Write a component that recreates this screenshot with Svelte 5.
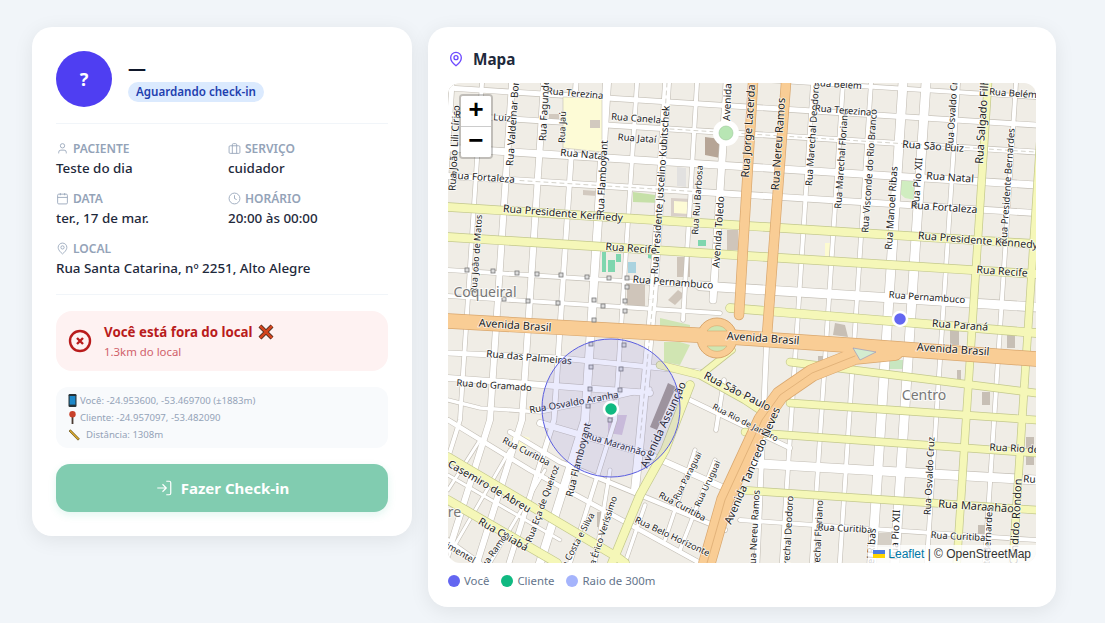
<script>
	// map data is in page coordinates, the svg viewBox starts at the map's corner
	const line = (y0, x1 = 448, x2 = 1036, k = 0.063) => [[x1, y0 + k * (x1 - 448)], [x2, y0 + k * (x2 - 448)]];
	const upright = (x0, y2 = 563) => [[x0, 83], [x0 - 0.065 * (y2 - 83), y2]];
	const bent = (x0) => [[x0, 83], [x0 - 22, 420], [x0 - 67, 563]];

	const minor = [
		[line(60, 770), 4], [line(88), 5], [line(115), 5], [line(148), 7], [line(176), 6],
		[line(270, 448, 700), 4], [line(270, 700), 9], [line(296, 448, 720), 4],
		[bent(452), 5], [bent(482), 4], [bent(512), 6], [bent(544), 6], [bent(576), 5], [bent(607), 8], [bent(637), 4],
		[[[667, 83], [653, 300], [640, 440], [635, 490]], 8],
		[[[697, 83], [683, 320]], 4], [[[727, 83], [713, 300]], 7],
		[upright(813), 4], [upright(843), 4], [upright(871), 4], [upright(903), 9], [upright(926), 9],
		[upright(958), 4], [upright(1016), 4], [[[767, 335], [757, 563]], 5], [[[724, 380], [716, 430]], 4],
		[[[448, 353], [560, 358], [700, 372]], 5],
		[[[448, 378], [650, 393]], 6],
		[[[448, 400], [480, 408], [540, 412], [620, 396], [650, 389]], 3.5],
		[[[540, 423], [650, 455], [740, 495]], 6],
		[[[510, 432], [560, 462], [640, 495], [725, 530]], 4.5],
		[[[448, 420], [530, 470], [640, 530], [700, 563]], 4.5],
		[[[448, 475], [560, 540]], 3],
		[[[690, 400], [790, 448]], 4.5],
		[[[448, 540], [480, 563]], 4],
		[[[480, 440], [448, 490]], 3], [[[510, 450], [455, 545]], 3], [[[545, 470], [490, 563]], 3],
		[[[695, 450], [665, 540]], 3.5], [[[715, 460], [680, 550]], 3.5], [[[645, 505], [625, 563]], 3.5],
		[[[610, 470], [595, 563]], 3.5],
		[[[745, 463], [1036, 480]], 9],
		[[[740, 520], [1036, 540]], 4]
	];
	const dotted = [
		line(115, 670), line(176, 520, 700), [[667, 83], [653, 300], [640, 440]]
	];
	const yellow = [
		[line(207), 8], [line(237), 8],
		[[[730, 308], [1036, 333]], 8],
		[upright(988), 7], [upright(1044), 7],
		[[[790, 362], [1036, 393]], 7], [[[790, 403], [1036, 420]], 7], [[[745, 432], [1036, 453]], 7],
		[[[740, 490], [1036, 510]], 7],
		[[[448, 457], [617, 557], [625, 563]], 8], [[[448, 500], [557, 563]], 8],
		[[[690, 385], [665, 450], [640, 495], [612, 563]], 8],
		[[[660, 365], [700, 375], [745, 400], [772, 418]], 7],
		[[[732, 350], [703, 373]], 6]
	];
	const orange = [
		[[[753, 83], [739, 315]], 9], [[[786, 83], [767, 335]], 9],
		[[[707, 563], [725, 500], [762, 420], [780, 395], [812, 373], [855, 356], [895, 352]], 16],
		[[[448, 321], [730, 337], [860, 346], [1036, 359]], 14]
	];

	const areas = [
		['#d9d0c9', '671,198 692,199 692,217 671,216'], ['#fdfbd6', '674,201 689,202 689,214 674,213'],
		['#c6e0a8', '633,192 663,196 660,203 633,202'], ['#b6a596', '705,137 720,139 720,158 705,155'],
		['#d2c9bf', '549,114 559,114 559,120 549,120'], ['#d2c9bf', '583,190 597,191 597,196 583,195'], ['#e2e1e0', '677,167 686,168 686,187 677,186'],
		['#7fd6af', '602,252 606,252 606,272 602,272'], ['#7fd6af', '608,260 615,260 615,272 608,272'], ['#7fd6af', '616,254 621,254 621,262 616,262'],
		['#aad3df', '628,262 636,262 636,273 628,273'], ['#7fd6af', '698,240 706,240 706,246 698,246'], ['#7fd6af', '648,254 652,255 652,259 648,258'],
		['#cfc5ba', '677,257 690,257 690,277 677,277'], ['#cfc5ba', '727,230 738,230 738,250 727,250'], ['#cfc5ba', '627,283 645,283 645,307 627,306'],
		['#cfc5ba', '668,300 678,290 685,295 675,305'], ['#cfe5b4', '660,318 690,325 690,332 660,330'], ['#d0e5b2', '664,342 680,342 690,345 680,365 664,362'],
		['#a69a92', '668,383 676,387 657,430 650,427'], ['#d7c7d7', '608,415 627,415 622,435 608,433'], ['#c8e6c0', '888,360 904,360 904,369 888,369'],
		['#fdfbd0', '825,243 833,243 833,256 825,256'], ['#d0edc0', '898,180 915,180 915,200 905,198 898,192'], ['#fdfbd0', '513,433 530,438 525,450 510,445'],
		['#c7bfb5', '950,330 959,330 959,345 950,345'], ['#c7bfb5', '1007,333 1015,334 1015,348 1007,348'], ['#c7bfb5', '835,323 845,325 848,337 833,335'],
		['#c7bfb5', '982,392 990,392 990,405 982,405'], ['#c7bfb5', '957,370 961,370 961,380 957,380'], ['#c7bfb5', '818,356 828,356 828,362 818,362'],
		['#c7bfb5', '1026,437 1034,437 1034,465 1026,465'], ['#c7bfb5', '978,525 985,525 985,535 978,535'], ['#c7bfb5', '597,512 605,512 602,527 597,527'],
		['#d5cfc6', '875,533 893,533 893,547 875,547']
	];

	const bollards = [
		[467, 270], [493, 271], [517, 273], [537, 274], [561, 275], [587, 277], [609, 278], [627, 278], [627, 287], [504, 299],
		[528, 301], [558, 303], [594, 300], [625, 301], [603, 306], [625, 311], [594, 320], [591, 344], [624, 345], [591, 367],
		[621, 369], [590, 389], [620, 390], [615, 397], [588, 406], [610, 420]
	];

	// text, x, y, rotation, size
	const labels = [
		['Rua Terezina', 575, 94, 5, 9.5], ['Rua Canela', 636, 119, 4, 9.5], ['Rua Jataí', 637, 139, 4, 9.5], ['Rua Natal', 583, 155, 5, 10],
		['Rua Fortaleza', 483, 178, 4, 10], ['Rua Presidente Kennedy', 563, 214, 4.5, 10.5], ['Rua João Lili Círico', 455, 148, -87, 10],
		['Rua Valdemar Bonfim', 514, 115, -86, 10], ['Rua Fagundes', 545, 108, -87, 10], ['Rua Jaú', 563, 127, -88, 9], ['Rua São Luiz', 483, 117, 4, 9.5],
		['Rua Flamboyant', 603, 178, -87, 10], ['Rua Presidente Juscelino Kubitschek', 661, 190, -86, 10], ['Rua Rui Barbosa', 698, 200, -86, 9],
		['Avenida Toledo', 719, 232, -86, 10], ['Avenida', 728, 102, -88, 10], ['Rua Jorge Lacerda', 749, 131, -86, 11], ['Rua Nereu Ramos', 779, 144, -86, 11],
		['Rua Marechal Deodoro', 813, 135, -86, 9.5], ['Rua Marechal Floriano', 842, 159, -86, 9.5], ['Rua Visconde do Rio Branco', 870, 171, -86, 9.5],
		['Rua Manoel Ribas', 892, 208, -86, 10], ['Rua Pio XII', 918, 183, -86, 10], ['Rua Osvaldo Cruz', 953, 110, -86, 9.5], ['Rua Salgado Filho', 983, 118, -86, 11],
		['Rua Belém', 1013, 94, 4, 9.5], ['Rua Belém', 838, 85, 4, 9.5], ['Rua Terezina', 843, 111, 4.5, 9.5], ['Rua São Luiz', 933, 147, 4, 10.5],
		['Rua Natal', 950, 178, 4, 10.5], ['Rua Fortaleza', 944, 208, 4, 10.5], ['Rua Presidente Bernardes', 1008, 186, -86, 9.5],
		['Rua Presidente Kennedy', 978, 241, 4.5, 10.5], ['Rua Recife', 631, 249, 4, 10.5], ['Rua Recife', 1002, 272, 4, 10.5],
		['Rua Pernambuco', 673, 283, 4.5, 10], ['Rua Pernambuco', 927, 298, 4, 9.5], ['Rua João de Matos', 477, 254, -86, 9],
		['Avenida Brasil', 515, 326, 4, 11], ['Avenida Brasil', 763, 339, 4, 11], ['Avenida Brasil', 953, 350, 4, 11], ['Rua Paraná', 960, 326, 4, 10.5],
		['Rua das Palmeiras', 529, 358, 5, 10], ['Rua do Gramado', 494, 386, 4, 9.5], ['Rua Osvaldo Aranha', 574, 403, -10, 9.5],
		['Rua Flamboyant', 579, 460, -76, 10], ['Rua Maranhão', 616, 445, 17, 9], ['Rua Curitiba', 526, 452, 27, 9], ['Casemiro de Abreu', 489, 487, 30, 10.5],
		['Rua Cuiabá', 503, 535, 30, 10.5], ['Rua Eça de Queiroz', 543, 504, -70, 9], ['Rua Érico Veríssimo', 602, 536, -72, 9], ['Rua Costa e Silva', 576, 545, -62, 9],
		['Rua Ramos', 494, 552, -55, 9], ['Pimentel', 458, 552, 30, 9], ['Avenida Assunção', 664, 425, -65, 11], ['Rua São Paulo', 737, 392, 27, 11],
		['Rua Rio de Janeiro', 745, 423, 27, 8.5], ['Rua Paraguai', 688, 476, -63, 8.5], ['Rua Uruguai', 708, 484, -65, 8.5], ['Rua Curitiba', 682, 507, 28, 9],
		['Rua Belo Horizonte', 672, 537, 25, 9], ['Avenida Tancredo Neves', 753, 466, -67, 11], ['Rua Nereu Ramos', 755, 530, -87, 9.5],
		['Rua Marechal Deodoro', 788, 547, -87, 9.5], ['Rua Marechal Floriano', 818, 550, -87, 9.5], ['Rua Curitiba', 845, 529, 3, 9.5], ['Rua Manoel Ribas', 871, 570, -87, 10],
		['Rua Pio XII', 896, 535, -87, 10], ['Rua Osvaldo Cruz', 930, 476, -87, 9.5], ['Rua Maranhão', 976, 507, 4, 11], ['Rua Curitiba', 958, 537, 3, 9.5],
		['Rua Presidente Bernardes', 987, 565, -87, 9.5], ['Rua Rio de Janeiro', 1032, 450, 3, 10], ['Rua Curitiba', 1052, 481, 3, 10], ['Rua Cândido Rondon', 1016, 533, -87, 11]
	];

	const places = [['Coqueiral', 485, 297], ['Centro', 924, 400], ['Alto Alegre', 425, 517]];

	const pts = (a) => a.map((p) => p.join(',')).join(' ');
</script>

<main class="page">
	<section class="card left">
		<header class="person">
			<div class="avatar">?</div>
			<div class="who">
				<h2>—</h2>
				<span class="badge">Aguardando check-in</span>
			</div>
		</header>

		<div class="details">
			<div class="field">
				<div class="label">
					<svg viewBox="0 0 24 24"><path d="M19 21v-2a4 4 0 0 0-4-4H9a4 4 0 0 0-4 4v2" /><circle cx="12" cy="7" r="4" /></svg>
					PACIENTE
				</div>
				<div class="value">Teste do dia</div>
			</div>
			<div class="field">
				<div class="label">
					<svg viewBox="0 0 24 24"><rect x="2" y="7" width="20" height="14" rx="2" /><path d="M16 21V5a2 2 0 0 0-2-2h-4a2 2 0 0 0-2 2v16" /></svg>
					SERVIÇO
				</div>
				<div class="value">cuidador</div>
			</div>
			<div class="field">
				<div class="label">
					<svg viewBox="0 0 24 24"><rect x="3" y="4" width="18" height="18" rx="2" /><path d="M16 2v4M8 2v4M3 10h18" /></svg>
					DATA
				</div>
				<div class="value">ter., 17 de mar.</div>
			</div>
			<div class="field">
				<div class="label">
					<svg viewBox="0 0 24 24"><circle cx="12" cy="12" r="10" /><path d="M12 6v6l4 2" /></svg>
					HORÁRIO
				</div>
				<div class="value">20:00 às 00:00</div>
			</div>
			<div class="field wide">
				<div class="label">
					<svg viewBox="0 0 24 24"><path d="M20 10c0 6-8 12-8 12s-8-6-8-12a8 8 0 0 1 16 0Z" /><circle cx="12" cy="10" r="3" /></svg>
					LOCAL
				</div>
				<div class="value">Rua Santa Catarina, nº 2251, Alto Alegre</div>
			</div>
		</div>

		<div class="alert">
			<svg class="alert-icon" viewBox="0 0 24 24"><circle cx="12" cy="12" r="10" /><path d="m15 9-6 6M9 9l6 6" /></svg>
			<div>
				<div class="alert-title">
					Você está fora do local
					<svg class="cross" viewBox="0 0 16 16">
						<path class="cross-edge" d="M2 2l12 12M14 2 2 14" />
						<path class="cross-fill" d="M2 2l12 12M14 2 2 14" />
					</svg>
				</div>
				<div class="alert-sub">1.3km do local</div>
			</div>
		</div>

		<div class="debug">
			<div class="debug-row">
				<svg class="emoji" viewBox="0 0 9 13"><rect x="0.5" width="8" height="13" rx="1.2" fill="#263238" /><rect x="1.6" y="2" width="5.8" height="8.6" fill="#1e88c9" /></svg>
				Você: -24.953600, -53.469700 (±1883m)
			</div>
			<div class="debug-row">
				<svg class="emoji" viewBox="0 0 9 13"><rect x="3.6" y="4" width="1.8" height="9" fill="#4a3b32" /><circle cx="4.5" cy="3.2" r="3.2" fill="#c8402a" /></svg>
				Cliente: -24.957097, -53.482090
			</div>
			<div class="debug-row">
				<svg class="emoji ruler" viewBox="0 0 12 12"><path d="M1 2 2.5.8 11.4 9.8 10 11.2Z" fill="#d9a92e" stroke="#5f4a14" stroke-width=".7" /></svg>
				Distância: 1308m
			</div>
		</div>

		<button class="checkin">
			<svg viewBox="0 0 24 24"><path d="M15 3h4a2 2 0 0 1 2 2v14a2 2 0 0 1-2 2h-4" /><path d="m10 17 5-5-5-5M15 12H3" /></svg>
			Fazer Check-in
		</button>
	</section>

	<section class="card right">
		<h3 class="map-title">
			<svg viewBox="0 0 24 24"><path d="M20 10c0 6-8 12-8 12s-8-6-8-12a8 8 0 0 1 16 0Z" /><circle cx="12" cy="10" r="3" /></svg>
			Mapa
		</h3>

		<div class="map">
			<svg class="tiles" viewBox="448 83 588 480">
				<rect x="448" y="83" width="588" height="480" fill="#f0ede6" />
				{#each areas as [fill, points]}
					<polygon {points} {fill} />
				{/each}

				{#each minor as [p, w]}
					<polyline points={pts(p)} stroke="#c4bfb6" stroke-width={w + 1.2} />
				{/each}
				{#each minor as [p, w]}
					<polyline points={pts(p)} stroke="#fff" stroke-width={w} />
				{/each}
				{#each dotted as p}
					<polyline points={pts(p)} stroke="#d4d2ca" stroke-width="1" stroke-dasharray="4 4" />
				{/each}

				<polygon points="563,97 602,98 602,152 563,148" fill="#fdfbd6" stroke="#c4bfb6" stroke-width=".6" />
				<polygon points="590,120 600,120 600,128 590,128" fill="#d2c9bf" />

				{#each yellow as [p, w]}
					<polyline points={pts(p)} stroke="#c3c88c" stroke-width={w + 1.4} />
				{/each}
				{#each yellow as [p, w]}
					<polyline points={pts(p)} stroke="#f5f7b8" stroke-width={w} />
				{/each}

				<circle cx="726" cy="133" r="13" fill="#fff" />
				<circle cx="726" cy="133" r="7" fill="#b8e6b4" stroke="#9cc79a" stroke-width=".6" />

				{#each orange as [p, w]}
					<polyline points={pts(p)} stroke="#d9a76e" stroke-width={w + 1.4} />
				{/each}
				<circle cx="717" cy="338" r="20" fill="#f9cd95" stroke="#d9a76e" />
				{#each orange as [p, w]}
					<polyline points={pts(p)} stroke="#f9cd95" stroke-width={w} />
				{/each}
				<path d="M707 331a12 12 0 0 1 20 0Z" fill="#cfe6b2" stroke="#d9a76e" stroke-width=".6" />
				<path d="M707 346a12 12 0 0 0 20 0Z" fill="#cfe6b2" stroke="#d9a76e" stroke-width=".6" />
				<polygon points="853,348 876,352 860,360" fill="#d3ecd0" stroke="#8f8fc0" stroke-width=".6" />
				<polyline points="707,563 725,500 762,420 780,395 812,373 855,356" stroke="#d9a76e" stroke-width=".7" />

				{#each bollards as [x, y]}
					<rect x={x - 2} y={y - 2} width="4" height="4" fill="#ddd" stroke="#777" stroke-width=".8" />
				{/each}

				{#each labels as [text, x, y, r, size]}
					<text class="street" transform="translate({x} {y}) rotate({r})" font-size={size}>{text}</text>
				{/each}
				{#each places as [text, x, y]}
					<text class="place" {x} {y}>{text}</text>
				{/each}

				<circle class="radius" cx="611" cy="408" r="69" />
				<circle class="pin" cx="611" cy="409" r="7" fill="#10b981" />
				<circle class="pin" cx="900" cy="319" r="7" fill="#6366f1" />
			</svg>

			<div class="zoom-bar">
				<span>+</span>
				<span>−</span>
			</div>

			<div class="attribution">
				<svg viewBox="0 0 12 8"><rect width="12" height="4" fill="#4c7be1" /><rect y="4" width="12" height="4" fill="#ffd500" /></svg>
				<span class="leaflet">Leaflet</span> | © OpenStreetMap
			</div>
		</div>

		<div class="legend">
			<div class="key"><i class="you"></i>Você</div>
			<div class="key"><i class="client"></i>Cliente</div>
			<div class="key"><i class="range"></i>Raio de 300m</div>
		</div>
	</section>
</main>

<style>
	:global(body) {
		background: #f1f5f9;
		font-family: "Noto Sans", sans-serif;
	}

	.page {
		display: flex;
		align-items: flex-start;
		gap: 16px;
		padding: 27px 32px;
	}

	.card {
		background: #fff;
		border-radius: 20px;
		box-shadow: 0 4px 20px rgba(0, 0, 0, 0.08);
		padding: 24px;
		box-sizing: border-box;
	}

	.left {
		width: 380px;
	}

	.right {
		width: 628px;
		padding: 20px 20px 17px;
	}

	.person {
		display: flex;
		align-items: center;
		gap: 16px;
		padding-bottom: 16px;
		border-bottom: 1px solid #f1f5f9;
	}

	.avatar {
		width: 56px;
		height: 56px;
		border-radius: 50%;
		background: #4f3ef2;
		color: #fff;
		font-size: 18px;
		font-weight: 700;
		display: flex;
		align-items: center;
		justify-content: center;
	}

	.who h2 {
		margin: 0;
		font-size: 18px;
		line-height: 24px;
		font-weight: 700;
		color: #0f172a;
	}

	.badge {
		display: block;
		margin-top: 2px;
		width: fit-content;
		padding: 0 8px;
		line-height: 20px;
		border-radius: 10px;
		background: #dbeafe;
		color: #1e40af;
		font-size: 11.6px;
		font-weight: 600;
	}

	.details {
		display: grid;
		grid-template-columns: 172px 1fr;
		row-gap: 11px;
		padding: 15px 0 16px;
		border-bottom: 1px solid #f1f5f9;
	}

	.wide {
		grid-column: 1 / 3;
	}

	.label {
		display: flex;
		align-items: center;
		gap: 4px;
		height: 18px;
		margin-bottom: 1px;
		font-size: 12px;
		font-weight: 600;
		color: #94a3b8;
	}

	.label svg {
		width: 13px;
		height: 13px;
		fill: none;
		stroke: #94a3b8;
		stroke-width: 1.6;
	}

	.value {
		font-size: 13.4px;
		line-height: 20px;
		font-weight: 500;
		color: #1e293b;
	}

	.alert {
		display: flex;
		align-items: center;
		gap: 12px;
		height: 60px;
		box-sizing: border-box;
		margin-top: 16px;
		padding: 0 12px;
		background: #fef2f2;
		border-radius: 16px;
	}

	.alert-icon {
		width: 24px;
		height: 24px;
		fill: none;
		stroke: #b91c1c;
		stroke-width: 2.4;
	}

	.alert-title {
		display: flex;
		align-items: center;
		gap: 5px;
		font-size: 13.3px;
		line-height: 19px;
		font-weight: 700;
		color: #b91c1c;
	}

	.cross {
		width: 16px;
		height: 16px;
		fill: none;
	}

	.cross-edge {
		stroke: #3a2a20;
		stroke-width: 4.2;
	}

	.cross-fill {
		stroke: #d2451e;
		stroke-width: 2.6;
	}

	.alert-sub {
		margin-top: 1px;
		font-size: 11.4px;
		line-height: 17px;
		color: #d0616a;
	}

	.debug {
		margin-top: 16px;
		padding: 5px 12px;
		height: 61px;
		box-sizing: border-box;
		background: #f8fafc;
		border-radius: 12px;
	}

	.debug-row {
		display: flex;
		align-items: center;
		gap: 2px;
		height: 17px;
		font-size: 9.6px;
		color: #94a3b8;
	}

	.emoji {
		width: 9px;
		height: 13px;
		margin-right: 1px;
	}

	.ruler {
		width: 12px;
		height: 12px;
		margin-right: 4px;
	}

	.checkin {
		display: flex;
		align-items: center;
		justify-content: center;
		gap: 8px;
		width: 100%;
		height: 48px;
		margin-top: 16px;
		border: 0;
		border-radius: 14px;
		background: #81ccb0;
		box-shadow: 0 3px 8px rgba(16, 185, 129, 0.12);
		color: #fff;
		font-family: inherit;
		font-size: 15px;
		font-weight: 700;
	}

	.checkin svg {
		width: 18px;
		height: 18px;
		fill: none;
		stroke: #fff;
		stroke-width: 1.6;
	}

	.map-title {
		display: flex;
		align-items: center;
		gap: 9px;
		height: 24px;
		margin: 0 0 12px;
		padding: 0;
		font-size: 15.3px;
		font-weight: 700;
		color: #1e293b;
	}

	.map-title svg {
		width: 16px;
		height: 16px;
		fill: none;
		stroke: #6d4aff;
		stroke-width: 2;
	}

	.map {
		position: relative;
		height: 480px;
		border-radius: 12px;
		overflow: hidden;
	}

	.tiles {
		display: block;
		width: 588px;
		height: 480px;
	}

	.tiles polyline {
		fill: none;
		stroke-linecap: round;
		stroke-linejoin: round;
	}

	.street {
		font-family: "Noto Sans", sans-serif;
		fill: #222;
		stroke: #fff;
		stroke-width: 1.6;
		stroke-opacity: 0.75;
		paint-order: stroke;
		text-anchor: middle;
		dominant-baseline: middle;
	}

	.place {
		font-family: "Noto Sans", sans-serif;
		font-size: 14px;
		fill: #777;
		stroke: #fff;
		stroke-width: 2;
		stroke-opacity: 0.7;
		paint-order: stroke;
		text-anchor: middle;
	}

	.radius {
		fill: #6366f1;
		fill-opacity: 0.13;
		stroke: #5a5de0;
		stroke-width: 1;
	}

	.pin {
		stroke: #fff;
		stroke-width: 2.5;
	}

	.zoom-bar {
		position: absolute;
		top: 11px;
		left: 11px;
		width: 30px;
		border: 2px solid rgba(0, 0, 0, 0.2);
		border-radius: 4px;
		background-clip: padding-box;
	}

	.zoom-bar span {
		display: block;
		height: 30px;
		line-height: 30px;
		background: #fff;
		text-align: center;
		font-family: "Liberation Mono", monospace;
		font-size: 26px;
		font-weight: 700;
		color: #000;
	}

	.zoom-bar span:first-child {
		border-bottom: 1px solid #ccc;
		border-radius: 2px 2px 0 0;
	}

	.zoom-bar span:last-child {
		border-radius: 0 0 2px 2px;
	}

	.attribution {
		position: absolute;
		right: 0;
		bottom: 0;
		padding: 0 5px;
		height: 18px;
		line-height: 18px;
		background: rgba(255, 255, 255, 0.8);
		font-family: "Liberation Sans", sans-serif;
		font-size: 12px;
		color: #333;
	}

	.attribution svg {
		width: 12px;
		height: 8px;
	}

	.leaflet {
		color: #0078a8;
	}

	.legend {
		display: flex;
		gap: 12px;
		margin-top: 8px;
		height: 19px;
	}

	.key {
		display: flex;
		align-items: center;
		gap: 4px;
		font-size: 11.4px;
		color: #64748b;
	}

	.key i {
		width: 12px;
		height: 12px;
		border-radius: 50%;
	}

	.you {
		background: #6366f1;
	}

	.client {
		background: #10b981;
	}

	.range {
		background: #a5b4fc;
	}
</style>
